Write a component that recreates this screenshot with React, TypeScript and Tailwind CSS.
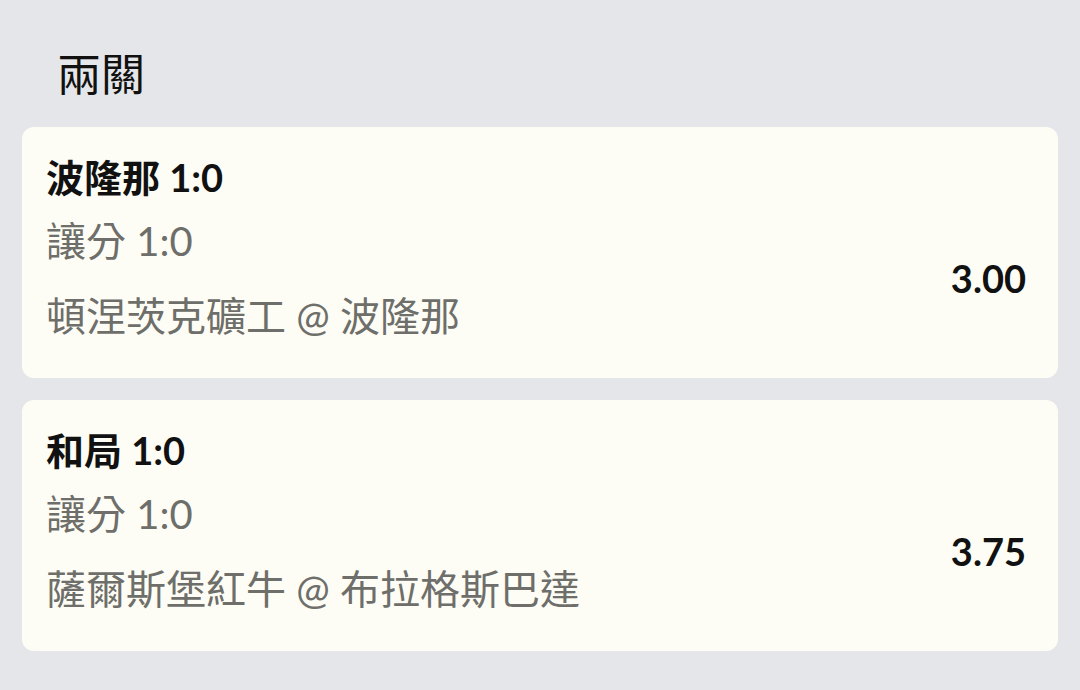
const legs = [
  { pick: '波隆那 1:0', market: '讓分 1:0', match: '頓涅茨克礦工 @ 波隆那', odds: '3.00' },
  { pick: '和局 1:0', market: '讓分 1:0', match: '薩爾斯堡紅牛 @ 布拉格斯巴達', odds: '3.75' },
];

function LegCard({ leg }: { leg: (typeof legs)[number] }) {
  return (
    <div className="bg-[#fdfdf5] rounded-[12px] pl-6 pr-8 pt-[26px] pb-[38px]">
      <p className="text-[38px] font-bold text-[#111] leading-[48px]">{leg.pick}</p>
      <div className="flex items-center">
        <div className="flex-1 min-w-0">
          <p className="text-[40px] font-normal text-[#6e6e6a] leading-[48px] mt-[16px]">{leg.market}</p>
          <p className="text-[40px] font-normal text-[#6e6e6a] leading-[48px] mt-[27px]">{leg.match}</p>
        </div>
        <span className="text-[38px] font-bold text-[#111] mt-[16px]">{leg.odds}</span>
      </div>
    </div>
  );
}

export default function App() {
  return (
    <div
      className="min-h-[690px] w-[1080px] bg-[#e5e6e9] px-[22px] pt-[44px] pb-10"
      style={{ fontFamily: 'Lato, "Noto Sans CJK TC", sans-serif' }}
    >
      <h1 className="text-[44px] font-normal text-[#111] leading-[60px] pl-[35px] mb-[23px]">兩關</h1>
      <div className="flex flex-col gap-[22px]">
        {legs.map((leg) => (
          <LegCard key={leg.odds} leg={leg} />
        ))}
      </div>
    </div>
  );
}
